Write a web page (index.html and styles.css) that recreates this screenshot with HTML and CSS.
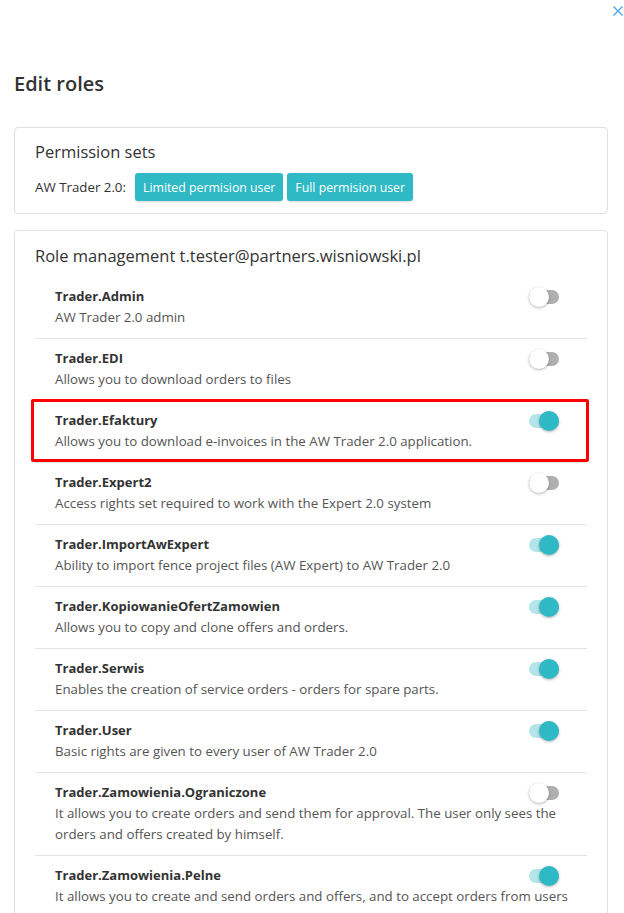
FILE: index.html
```html
<!DOCTYPE html>
<html lang="en">
<head>
<meta charset="utf-8">
<title>Edit roles</title>
<link rel="stylesheet" href="styles.css">
</head>
<body>
<button class="close" aria-label="Close">
  <svg width="10" height="10" viewBox="0 0 10 10"><path d="M0.5 0.5 L9.5 9.5 M9.5 0.5 L0.5 9.5" stroke="#4aa6e6" stroke-width="1.4" fill="none"/></svg>
</button>
<div class="modal">
  <h1 class="title">Edit roles</h1>

  <section class="card">
    <h2 class="card-title">Permission sets</h2>
    <div class="sets">
      <span class="sets-label">AW Trader 2.0:</span>
      <button class="btn">Limited permision user</button>
      <button class="btn">Full permision user</button>
    </div>
  </section>

  <section class="card card-roles">
    <h2 class="card-title">Role management t.tester@partners.wisniowski.pl</h2>
    <ul class="roles">
      <li class="role">
        <div class="role-head"><span class="role-name">Trader.Admin</span><span class="toggle"></span></div>
        <div class="role-desc">AW Trader 2.0 admin</div>
      </li>
      <li class="role">
        <div class="role-head"><span class="role-name">Trader.EDI</span><span class="toggle"></span></div>
        <div class="role-desc">Allows you to download orders to files</div>
      </li>
      <li class="role">
        <div class="role-head"><span class="role-name">Trader.Efaktury</span><span class="toggle on"></span></div>
        <div class="role-desc">Allows you to download e-invoices in the AW Trader 2.0 application.</div>
        <span class="mark"></span>
      </li>
      <li class="role">
        <div class="role-head"><span class="role-name">Trader.Expert2</span><span class="toggle"></span></div>
        <div class="role-desc">Access rights set required to work with the Expert 2.0 system</div>
      </li>
      <li class="role">
        <div class="role-head"><span class="role-name">Trader.ImportAwExpert</span><span class="toggle on"></span></div>
        <div class="role-desc">Ability to import fence project files (AW Expert) to AW Trader 2.0</div>
      </li>
      <li class="role">
        <div class="role-head"><span class="role-name">Trader.KopiowanieOfertZamowien</span><span class="toggle on"></span></div>
        <div class="role-desc">Allows you to copy and clone offers and orders.</div>
      </li>
      <li class="role">
        <div class="role-head"><span class="role-name">Trader.Serwis</span><span class="toggle on"></span></div>
        <div class="role-desc">Enables the creation of service orders - orders for spare parts.</div>
      </li>
      <li class="role">
        <div class="role-head"><span class="role-name">Trader.User</span><span class="toggle on"></span></div>
        <div class="role-desc">Basic rights are given to every user of AW Trader 2.0</div>
      </li>
      <li class="role">
        <div class="role-head"><span class="role-name">Trader.Zamowienia.Ograniczone</span><span class="toggle"></span></div>
        <div class="role-desc">It allows you to create orders and send them for approval. The user only sees the orders and offers created by himself.</div>
      </li>
      <li class="role">
        <div class="role-head"><span class="role-name">Trader.Zamowienia.Pelne</span><span class="toggle on"></span></div>
        <div class="role-desc">It allows you to create and send orders and offers, and to accept orders from users</div>
      </li>
    </ul>
  </section>
</div>
</body>
</html>
```

FILE: styles.css
```css
* { box-sizing: border-box; }
html, body { margin: 0; padding: 0; background: #fff; }
body {
  font-family: "Open Sans", "Noto Sans", sans-serif;
  color: #333;
  font-size: 13px;
  overflow: hidden;
}
.close {
  position: absolute;
  top: 6px;
  right: 1px;
  border: 0;
  background: none;
  padding: 0;
  width: 10px;
  height: 10px;
  line-height: 0;
  cursor: pointer;
}
.modal { padding: 72px 16px 0 14px; }
.title {
  margin: 0;
  font-size: 20px;
  line-height: 24px;
  font-weight: 600;
  color: #333;
}
.card {
  margin-top: 31px;
  border: 1px solid #e0e0e0;
  border-radius: 4px;
  padding: 12px 20px 12px 20px;
}
.card-roles { margin-top: 16px; padding-top: 13px; padding-bottom: 0; }
.card-title {
  margin: 0;
  font-size: 16.5px;
  line-height: 24px;
  font-weight: 400;
  color: #333;
}
.sets {
  margin-top: 9px;
  display: flex;
  align-items: center;
  gap: 4px;
}
.sets-label { margin-right: 5px; color: #333; font-size: 13.3px; }
.btn {
  font-family: inherit;
  font-size: 12.3px;
  height: 28px;
  padding: 0 8px;
  border: 0;
  border-radius: 3px;
  background: #2fb9c5;
  color: #fff;
  box-shadow: 0 1px 2px rgba(0,0,0,0.15);
}
.roles { list-style: none; margin: 9px 0 0; padding: 0; }
.role {
  position: relative;
  padding: 9px 10px 10px 20px;
  border-bottom: 1px solid #e3e3e3;
  line-height: 21px;
}
.role-head {
  display: flex;
  align-items: center;
  justify-content: space-between;
  height: 21px;
  padding-right: 18px;
}
.role-name { font-weight: 700; color: #333; }
.role-desc { color: #555; font-size: 13.3px; }
.toggle {
  position: relative;
  flex: none;
  width: 30px;
  height: 14px;
  border-radius: 7px;
  background: #b0b0b0;
}
.toggle::after {
  content: "";
  position: absolute;
  top: -3px;
  left: 0;
  width: 20px;
  height: 20px;
  border-radius: 50%;
  background: #fff;
  box-shadow: 0 1px 3px rgba(0,0,0,0.3);
}
.toggle.on { background: #b3e5e9; }
.toggle.on::after { left: 10px; background: #2fb9c5; }
.mark {
  position: absolute;
  top: -2px;
  left: -4px;
  right: -2px;
  bottom: 0;
  border: 3px solid #f00;
  border-radius: 2px;
  pointer-events: none;
}
```
